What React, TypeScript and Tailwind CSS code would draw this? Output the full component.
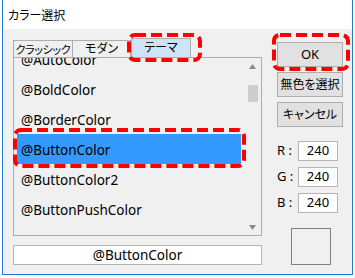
import React from "react";

const items = ["@AutoColor", "@BoldColor", "@BorderColor", "@ButtonColor", "@ButtonColor2", "@ButtonPushColor"];

function Btn({ children }: { children: React.ReactNode }) {
  return (
    <div className="h-[25px] w-[66px] border border-[#adadad] bg-[#e1e1e1] flex items-center justify-center text-[12px] text-black whitespace-nowrap">
      {children}
    </div>
  );
}

function Field({ label }: { label: string }) {
  return (
    <div className="flex items-center h-[20px]">
      <span className="w-[21px] text-[13px] text-black whitespace-nowrap">{label}</span>
      <div className="w-[40px] h-[20px] border border-[#b4b4b4] bg-white flex items-center justify-center text-[13px] text-black">
        240
      </div>
    </div>
  );
}

export default function App() {
  return (
    <div
      className="relative w-[355px] h-[278px] bg-white overflow-hidden"
      style={{ fontFamily: '"Noto Sans", "Noto Sans CJK JP", sans-serif', fontFeatureSettings: '"palt"' }}
    >
      <div className="ml-[2px] w-[351px] h-[275px] border-l border-r border-b border-[#1e7bd6] flex flex-col">
        <div className="h-[29px] bg-white flex items-center pl-[5px] pt-[3px] text-[12px] text-black">カラー選択</div>
        <div className="flex-1 bg-[#f0f0f0] flex items-start pl-[10px]">
          {/* left column */}
          <div className="w-[249px] pt-[9px] flex flex-col">
            <div className="flex items-end h-[19px] text-[12px] text-black whitespace-nowrap">
              <div className="w-[60px] h-[17px] border border-b-0 border-[#adadad] bg-[#f0f0f0] flex items-center justify-center leading-none text-[11px] tracking-[-0.3px] overflow-hidden">クラッシック</div>
              <div className="w-[59px] h-[17px] -ml-px border border-b-0 border-[#adadad] bg-[#f0f0f0] flex items-center justify-center leading-none">モダン</div>
              <div className="w-[60px] h-[19px] border border-b-0 border-[#adadad] bg-[#cce4f7] flex items-center justify-center leading-none">テーマ</div>
            </div>
            <div className="h-[179px] border border-[#adadad] bg-[#f0f0f0] flex overflow-hidden">
              <div className="flex-1 overflow-hidden pl-[3px] pr-[3px]">
                <div className="-mt-[14px] flex flex-col">
                  {items.map((it) => (
                    <div
                      key={it}
                      className={
                        "h-[30px] flex items-center pl-[4px] pt-[3px] text-[13.5px] text-black " +
                        (it === "@ButtonColor" ? "bg-[#3399ff]" : "")
                      }
                    >
                      {it}
                    </div>
                  ))}
                </div>
              </div>
              <div className="w-[17px] flex flex-col items-center">
                <div className="h-[15px] flex items-center justify-center pt-[1px]">
                  <svg width="7" height="5" viewBox="0 0 7 5"><path d="M3.5 0 L7 5 L0 5 Z" fill="#8a8a8a" /></svg>
                </div>
                <div className="mt-[12px] w-[10px] h-[17px] bg-[#cdcdcd]" />
                <div className="flex-1" />
                <div className="h-[15px] flex items-center justify-center">
                  <svg width="7" height="5" viewBox="0 0 7 5"><path d="M0 0 L7 0 L3.5 5 Z" fill="#8a8a8a" /></svg>
                </div>
              </div>
            </div>
            <div className="mt-[9px] h-[20px] border border-[#b4b4b4] bg-white flex items-center justify-center text-[13.5px] text-black">
              @ButtonColor
            </div>
          </div>
          {/* right column */}
          <div className="ml-[15px] w-[66px] pt-[13px] flex flex-col">
            <div className="flex flex-col gap-[5px]">
              <Btn><span className="text-[13px]">OK</span></Btn>
              <Btn>無色を選択</Btn>
              <Btn>キャンセル</Btn>
            </div>
            <div className="mt-[14px] flex flex-col gap-[6px]">
              <Field label="R :" />
              <Field label="G :" />
              <Field label="B :" />
            </div>
            <div className="mt-[15px] ml-[14px] w-[40px] h-[37px] border border-[#808080] bg-[#f0f0f0]" />
          </div>
        </div>
      </div>
      <svg className="absolute left-0 top-0 pointer-events-none" width="355" height="278">
        <g fill="none" stroke="#ff0000" strokeWidth="4" strokeDasharray="11 5">
          <rect x="129" y="35" width="71" height="25" rx="6" />
          <rect x="274" y="35" width="74" height="34" rx="6" />
          <rect x="15" y="130" width="229" height="36" rx="6" />
        </g>
      </svg>
    </div>
  );
}
